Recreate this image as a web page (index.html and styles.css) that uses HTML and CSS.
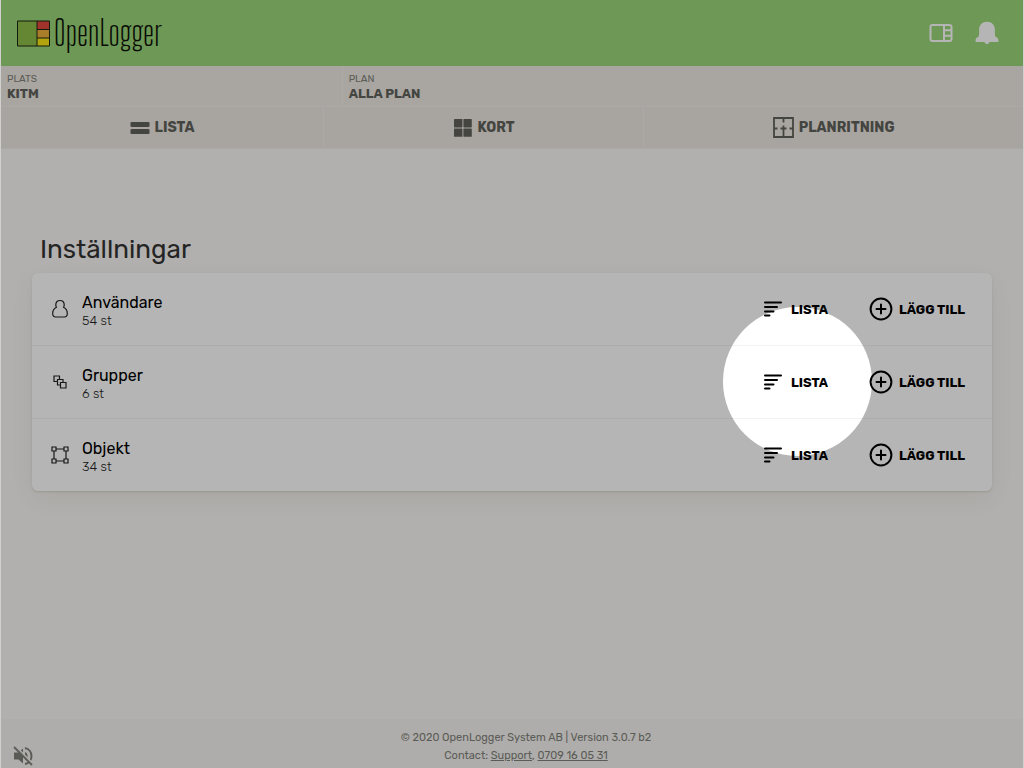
FILE: index.html
```html
<!DOCTYPE html>
<html lang="sv">
<head>
<meta charset="utf-8">
<meta name="viewport" content="width=device-width, initial-scale=1">
<title>OpenLogger – Inställningar</title>
<link rel="stylesheet" href="styles.css">
</head>
<body>
<svg class="sprite" aria-hidden="true">
  <symbol id="list" viewBox="0 0 20 16"><path d="M2 1.5h16M2 6h12M2 10.500h8.500M2 14.500h4.500" fill="none" stroke="currentColor" stroke-width="2" stroke-linecap="round"/></symbol>
  <symbol id="plus" viewBox="0 0 24 24"><g fill="none" stroke="currentColor" stroke-width="2" stroke-linecap="round"><circle cx="12" cy="12" r="10.400"/><path d="M12 7.500v9M7.500 12h9"/></g></symbol>
</svg>
<div class="app">
  <header class="header">
    <a class="brand" href="#">
      <svg class="brand-mark" viewBox="0 0 33 27" aria-hidden="true">
        <path fill="#8fbd48" d="M.5 1h20v25H.5z"/><path fill="#e5483f" d="M20 1h12.500v8.500H20z"/><path fill="#f0b03c" d="M20 9.500h12.500v8.500H20z"/><path fill="#fbe816" d="M20 18h12.500v8H20z"/>
        <path d="M.5 1h32v25H.5zM20 1v25M20 9.500h12.500M20 18h12.500" fill="none" stroke="#1c2412"/>
      </svg>
      <span class="brand-name">OpenLogger</span>
    </a>
    <button class="icon-button" aria-label="Panel">
      <svg width="24" height="20" viewBox="0 0 24 20" fill="none" stroke="currentColor" stroke-width="2"><rect x="1.500" y="2" width="21" height="16" rx="2"/><path d="M15 2v16M15 7.300h7.500M15 12.700h7.500"/></svg>
    </button>
    <button class="icon-button" aria-label="Aviseringar">
      <svg width="24" height="24" viewBox="0 0 24 24" fill="currentColor"><path d="M12 .8c-4.800 0-7.900 3.400-7.900 8v4.400c0 1.600-.5 2.600-1.600 3.100C1.200 17 .6 17.900.6 19.400V21h9c.3 1.400 1.200 2.100 2.400 2.100s2.100-.7 2.400-2.100h9v-1.600c0-1.500-.6-2.400-1.900-3.100-1.100-.5-1.600-1.500-1.600-3.100V8.800c0-4.600-3.100-8-7.900-8z"/></svg>
    </button>
  </header>

  <div class="location">
    <div class="place"><span class="place-label">PLATS</span><strong class="place-name">KITM</strong></div>
    <div class="place"><span class="place-label">PLAN</span><strong class="place-name">ALLA PLAN</strong></div>
  </div>

  <nav class="tabs">
    <a class="tab" href="#"><svg width="20" height="14" viewBox="0 0 20 14" fill="currentColor"><rect x=".5" y="1" width="19" height="5" rx="1"/><rect x=".5" y="8" width="19" height="5" rx="1"/></svg>LISTA</a>
    <a class="tab" href="#"><svg width="20" height="18" viewBox="0 0 20 18" fill="currentColor"><rect x="1" width="8.400" height="8.400" rx=".6"/><rect x="10.400" width="8.400" height="8.400" rx=".6"/><rect x="1" y="9.400" width="8.400" height="8.400" rx=".6"/><rect x="10.400" y="9.400" width="8.400" height="8.400" rx=".6"/></svg>KORT</a>
    <a class="tab" href="#"><svg width="21" height="21" viewBox="0 0 21 21" fill="none" stroke="currentColor" stroke-width="1.800"><path d="M1 1h19v19H1zM10.500 1v4.500M10.500 20V8.500M7.500 11.500h6M1 11.500h3.500M20 11.500h-3.500"/></svg>PLANRITNING</a>
  </nav>

  <main class="main">
    <h1 class="title">Inställningar</h1>
    <ul class="card">
      <li class="row">
        <svg class="row-icon" viewBox="0 0 20 20"><path d="M10 1.500c-2.500 0-4.200 1.800-4.200 4.200 0 1.100.2 1.900.6 2.600-2.300 1.200-3.700 3.300-3.700 6.200 0 2.500.9 3.500 3 3.500h8.600c2.100 0 3-1 3-3.500 0-2.900-1.400-5-3.700-6.200.4-.7.6-1.500.6-2.600 0-2.400-1.700-4.200-4.200-4.200z"/></svg>
        <div class="row-text"><h2 class="row-name">Användare</h2><p class="row-count">54 st</p></div>
        <button class="action"><svg class="list-icon"><use href="#list"/></svg>LISTA</button>
        <button class="action action-add"><svg class="plus-icon"><use href="#plus"/></svg>LÄGG TILL</button>
      </li>
      <li class="row">
        <svg class="row-icon" viewBox="0 0 20 20"><path d="M7.500 9.500h-3.500V4h5.500v3M10.500 13H7.500V7.500H13V10.500M10.500 10.500H16V16h-5.500z"/></svg>
        <div class="row-text"><h2 class="row-name">Grupper</h2><p class="row-count">6 st</p></div>
        <button class="action"><svg class="list-icon"><use href="#list"/></svg>LISTA</button>
        <button class="action action-add"><svg class="plus-icon"><use href="#plus"/></svg>LÄGG TILL</button>
      </li>
      <li class="row">
        <svg class="row-icon" viewBox="0 0 20 20"><path d="M2 2h4v4H2zM14 2h4v4h-4zM2 14h4v4H2zM14 14h4v4h-4zM6 4h8M6 16h8M4 6v8M16 6v8"/></svg>
        <div class="row-text"><h2 class="row-name">Objekt</h2><p class="row-count">34 st</p></div>
        <button class="action"><svg class="list-icon"><use href="#list"/></svg>LISTA</button>
        <button class="action action-add"><svg class="plus-icon"><use href="#plus"/></svg>LÄGG TILL</button>
      </li>
    </ul>
  </main>

  <footer class="footer">
    <button class="mute" aria-label="Ljud av">
      <svg width="20" height="20" viewBox="0 0 20 20"><path fill="currentColor" d="M1 6.500h4.500L10 2.500v15l-4.500-4H1zM12 6c1.700.7 2.600 2.200 2.600 4s-.9 3.300-2.600 4z"/><path d="M12 2c4 .8 6.500 4.200 6.500 8s-2.500 7.200-6.500 8" fill="none" stroke="currentColor" stroke-width="2"/><path d="M2.500 .5l17 17" stroke="#f5f3f0" stroke-width="2"/><path d="M1 1l18 18" stroke="currentColor" stroke-width="1.800"/></svg>
    </button>
    <p class="footer-line">© 2020 OpenLogger System AB | Version 3.0.7 b2</p>
    <p class="footer-line">Contact: <a href="#">Support</a>, <a href="#">0709 16 05 31</a></p>
  </footer>
  <div class="spotlight"></div>
</div>
</body>
</html>
```
FILE: styles.css
```css
* { box-sizing: border-box; }

body {
  margin: 0;
  padding: 0 1px;
  background: #d0d0cf;
  font-family: Rubik, Roboto, "Liberation Sans", sans-serif;
}

.sprite { display: none; }
svg { display: block; flex: none; }
h1, h2, p, ul { margin: 0; padding: 0; font-weight: 400; }
button { border: 0; padding: 0; background: none; font: inherit; color: inherit; }

.app {
  position: relative;
  display: flex;
  flex-direction: column;
  min-height: 100vh;
  overflow: hidden;
  background: #faf8f5;
}

.header {
  display: flex;
  align-items: center;
  gap: 22px;
  height: 66px;
  padding: 0 24px 0 16px;
  background: #9cd779;
  color: #fff;
}

.brand {
  display: flex;
  align-items: center;
  gap: 4px;
  margin-right: auto;
  color: #0c1008;
  text-decoration: none;
}

.brand-mark { width: 33px; height: 27px; }
.brand-name { font-family: "Big Shoulders Display", "Roboto Condensed", sans-serif; font-size: 35px; font-weight: 300; line-height: 36px; }

.location { display: grid; grid-template-columns: 1fr 2fr; }

.place {
  display: flex;
  flex-direction: column;
  height: 41px;
  padding: 7px 6px 0;
  background: #eee9e2;
  border-bottom: 1px solid #f3efea;
  color: #60625b;
}

.place + .place { border-left: 1px solid #f3efea; }
.place-label { font-size: 10px; line-height: 13px; color: #81827b; }
.place-name { font-size: 13px; line-height: 16px; font-weight: 700; }

.tabs { display: flex; }

.tab {
  display: flex;
  flex: 1 1 auto;
  align-items: center;
  justify-content: center;
  gap: 5px;
  height: 42px;
  background: #ede8e1;
  border-bottom: 1px solid #f3efea;
  color: #60625b;
  font-size: 14px;
  font-weight: 700;
  text-decoration: none;
}

.tab + .tab { border-left: 1px solid #f3efea; }

.main { flex: 1; padding: 85px 31px 0; }
.title { padding-left: 8px; font-size: 26px; line-height: 32px; color: #333; }

.card {
  margin-top: 7px;
  list-style: none;
  background: #fff;
  border-radius: 6px;
  box-shadow: 0 1px 2px rgba(90, 80, 30, 0.16), 0 8px 24px rgba(60, 40, 20, 0.06);
}

.row {
  display: flex;
  align-items: center;
  min-height: 72px;
  padding: 0 27px 0 18px;
}

.row + .row { min-height: 73px; border-top: 1px solid #f2f2f2; }
.row-icon { width: 20px; height: 20px; fill: none; stroke: #222; stroke-width: 1.2px; }
.row-text { flex: 1; padding: 3px 0 0 12px; }
.row-name { font-size: 16px; line-height: 21px; color: #000; }
.row-count { font-size: 13px; line-height: 16px; font-weight: 300; color: #222; }

.action {
  display: flex;
  align-items: center;
  gap: 8px;
  color: #000;
  font-size: 13px;
  font-weight: 700;
}

.action-add { gap: 6px; margin-left: 41px; }
.list-icon { width: 20px; height: 16px; }
.plus-icon { width: 24px; height: 24px; }

.footer {
  position: relative;
  height: 49px;
  padding: 10px 0 0 28px;
  background: #f6f4f1;
  color: #81827a;
  text-align: center;
}

.footer-line { font-size: 11px; line-height: 18px; }
.footer a { color: inherit; }
.mute { position: absolute; left: 12px; bottom: 2px; color: #81817a; }

.spotlight {
  position: absolute;
  top: 307px;
  right: 151px;
  width: 149px;
  height: 149px;
  border-radius: 50%;
  box-shadow: 0 0 0 2000px rgba(0, 0, 0, 0.29);
  pointer-events: none;
}
```
